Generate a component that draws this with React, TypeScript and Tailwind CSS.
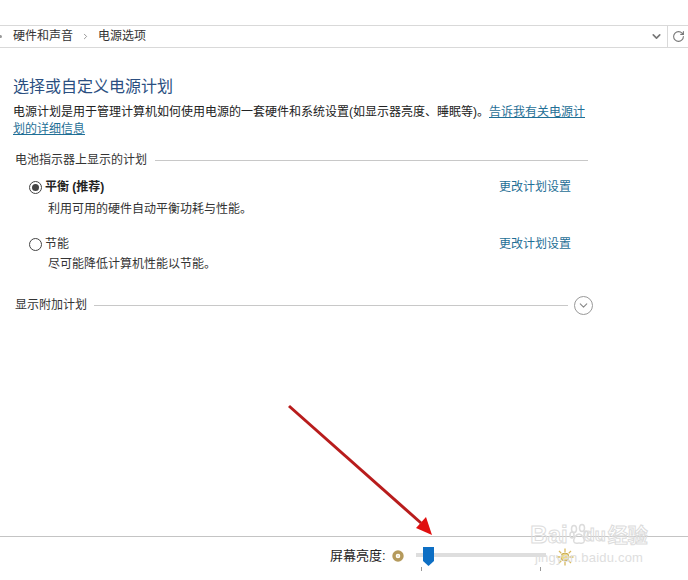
import { ChevronDown, ChevronRight, RotateCw } from "lucide-react";

function Radio({ checked }: { checked?: boolean }) {
  return (
    <span className="w-[13px] h-[13px] rounded-full border border-[#444] flex items-center justify-center shrink-0 bg-white">
      {checked && <span className="w-[7px] h-[7px] rounded-full bg-[#444]" />}
    </span>
  );
}

function Plan({ name, desc, checked }: { name: string; desc: string; checked?: boolean }) {
  return (
    <div className="flex items-start justify-between w-[542px] ml-[29px]">
      <div>
        <div className="flex items-center gap-[3px] h-[18px]">
          <Radio checked={checked} />
          <span className={checked ? "font-bold text-[#222]" : "text-[#333]"}>{name}</span>
        </div>
        <div className={`ml-[19px] h-[18px] leading-[18px] text-[#333] ${checked ? "mt-[4px]" : "mt-[2px]"}`}>{desc}</div>
      </div>
      <a className="text-[#1f6f96] h-[18px] leading-[18px]">更改计划设置</a>
    </div>
  );
}

export default function App() {
  return (
    <div className="relative w-[688px] h-[580px] overflow-hidden bg-white text-[12px] text-[#222] font-['Liberation_Sans','Noto_Sans_CJK_SC',sans-serif] flex flex-col">
      {/* Address bar */}
      <div className="mt-[25px] h-[23px] border-y border-[#d9d9d9] flex items-center shrink-0">
        <span className="w-[3px] h-[3px] -ml-[1px] bg-[#999] rounded-full" />
        <span className="ml-[11px] text-[#333] -mt-[1px]">硬件和声音</span>
        <ChevronRight size={9} strokeWidth={2} className="mx-[8px] text-[#777]" />
        <span className="text-[#333] -mt-[1px]">电源选项</span>
        <ChevronDown size={13} strokeWidth={3} className="ml-auto mr-[4px] text-[#777]" />
        <div className="h-full border-l border-[#d9d9d9] w-[21px] flex items-center justify-center">
          <RotateCw size={13} strokeWidth={2} className="text-[#777]" />
        </div>
      </div>

      {/* Main content */}
      <div className="flex-1 pt-[27px]">
        <h1 className="ml-[13px] text-[16px] leading-[24px] text-[#2b4f81]">选择或自定义电源计划</h1>
        <div className="ml-[13px] mt-[5px] leading-[16px] text-[#222]">
          <p>
            电源计划是用于管理计算机如何使用电源的一套硬件和系统设置(如显示器亮度、睡眠等)。
            <a className="text-[#1f6f96] underline">告诉我有关电源计</a>
          </p>
          <a className="block mt-[1px] text-[#1f6f96] underline">划的详细信息</a>
        </div>

        <div className="ml-[15px] mt-[14px] w-[573px] flex items-center gap-[8px] h-[18px]">
          <span className="text-[#333]">电池指示器上显示的计划</span>
          <span className="flex-1 h-px bg-[#c8c8c8]" />
        </div>

        <div className="mt-[9px] flex flex-col gap-[17px]">
          <Plan checked name="平衡 (推荐)" desc="利用可用的硬件自动平衡功耗与性能。" />
          <Plan name="节能" desc="尽可能降低计算机性能以节能。" />
        </div>

        <div className="ml-[15px] mt-[22px] w-[578px] flex items-center h-[20px]">
          <span className="text-[#333]">显示附加计划</span>
          <span className="flex-1 h-px bg-[#c8c8c8] ml-[7px] mr-[6px]" />
          <span className="w-[19px] h-[19px] rounded-full border border-[#999] flex items-center justify-center">
            <ChevronDown size={13} strokeWidth={2} className="text-[#888]" />
          </span>
        </div>
      </div>

      {/* Brightness footer */}
      <div className="h-[44px] border-t border-[#c4c4c4] flex items-start shrink-0 pl-[330px] pt-[9px]">
        <span className="text-[13px] leading-[19px] text-[#222]">屏幕亮度:</span>
        <svg width="12" height="12" viewBox="0 0 12 12" className="ml-[6px] mt-[4px]">
          <circle cx="6" cy="6" r="4" fill="none" stroke="#b59a5c" strokeWidth="3.4" />
          <circle cx="6" cy="6" r="1.2" fill="#f3e9c8" />
        </svg>
        <div className="relative ml-[12px] w-[130px] h-[26px]">
          <div className="mt-[7px] h-[4px] bg-[#dedede]" />
          <svg width="11" height="19" viewBox="0 0 11 19" className="absolute left-[7px] top-[1px]">
            <path d="M0 0H11V14L5.5 19L0 14Z" fill="#0e6fc4" />
          </svg>
          <span className="absolute left-[5px] top-[21px] w-px h-[4px] bg-[#999]" />
          <span className="absolute left-[124px] top-[21px] w-px h-[4px] bg-[#999]" />
        </div>
        <svg width="18" height="18" viewBox="0 0 18 18" className="ml-[10px] mt-[2px]">
          <g stroke="#d8b95e" strokeWidth="1.3">
            <path d="M9 0.5V4M9 14V17.5M0.5 9H4M14 9H17.5M3 3L5.4 5.4M12.6 12.6L15 15M15 3L12.6 5.4M5.4 12.6L3 15" />
          </g>
          <circle cx="9" cy="9" r="4" fill="#ecd98c" stroke="#c9a94e" />
        </svg>
      </div>

      {/* Red annotation arrow drawn over the screenshot */}
      <svg width="688" height="580" className="absolute inset-0 pointer-events-none">
        <line x1="289" y1="406" x2="421" y2="523" stroke="#b81c1c" strokeWidth="3" />
        <path d="M432 535L416 528L426 517Z" fill="#e01010" />
      </svg>

      {/* Baidu watermark */}
      <div className="absolute left-[528px] top-[521px] w-[122px] flex flex-col items-center pointer-events-none">
        <div className="flex items-center text-[24px] leading-[28px] font-bold text-transparent [-webkit-text-stroke:1px_#dcdcdc]">
          <span className="font-['Liberation_Sans',sans-serif]">Bai</span>
          <svg width="20" height="24" viewBox="0 0 20 24" className="mx-[1px]">
            <g fill="none" stroke="#dcdcdc" strokeWidth="1.5">
              <ellipse cx="5" cy="6" rx="2.5" ry="3.5" />
              <ellipse cx="13" cy="5" rx="2.5" ry="3.5" />
              <ellipse cx="17" cy="11" rx="2" ry="3" />
              <ellipse cx="3" cy="12" rx="2" ry="3" />
              <path d="M10 11C7 11 4 16 5 19C6 21 8 20 10 20C12 20 14 21 15 19C16 16 13 11 10 11Z" />
            </g>
          </svg>
          <span className="font-['Liberation_Sans',sans-serif] -ml-[6px] text-[18px]">du</span>
          <span className="text-[20px] font-['Noto_Sans_CJK_SC',sans-serif] ml-[2px]">经验</span>
        </div>
        <span className="text-[13px] leading-[14px] mt-[2px] tracking-[0.2px] text-[#dedede]">jingyan.baidu.com</span>
      </div>
    </div>
  );
}
